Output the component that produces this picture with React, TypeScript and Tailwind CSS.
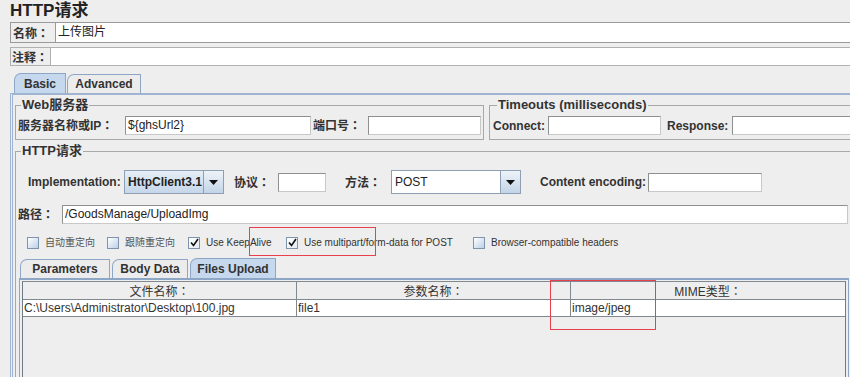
import React from "react";

const font = { fontFamily: '"Liberation Sans", Arial, "Noto Sans CJK SC", sans-serif' };
const jp = { fontFamily: '"Noto Sans CJK JP", sans-serif' };

// full-width colon centred like the Swing font does
const L = ({ text, className = "" }: { text: string; className?: string }) => {
	const hasColon = text.endsWith("：");
	return (
		<span className={`font-bold text-[12px] whitespace-nowrap ${className}`}>
			{hasColon ? text.slice(0, -1) : text}
			{hasColon && <span style={jp}>：</span>}
		</span>
	);
};

const Field = ({ w, value, className = "" }: { w?: string; value?: string; className?: string }) => (
	<div
		className={`h-[19px] bg-white border border-[#8e8f8f] border-r-[#c8c8c8] border-b-[#c8c8c8] pl-[2px] text-[12px] leading-[17px] text-[#222] whitespace-nowrap overflow-hidden ${w ?? "flex-1"} ${className}`}
	>
		{value}
	</div>
);

const Arrow = () => (
	<div className="w-[20px] h-full border-l border-[#8e9fb4] bg-gradient-to-b from-[#eef3f9] to-[#c3d4e8] flex items-center justify-center">
		<svg width="9" height="5" viewBox="0 0 9 5">
			<path d="M0 0 L9 0 L4.5 5 Z" fill="#111" />
		</svg>
	</div>
);

const Check = ({ checked, label, small }: { checked?: boolean; label: string; small?: boolean }) => (
	<div className="flex items-center">
		<div
			className={`w-[12px] h-[12px] border border-[#7f93ab] flex items-center justify-center ${
				checked ? "bg-gradient-to-br from-white to-[#e4ebf3]" : "bg-gradient-to-br from-white to-[#bcd0e8]"
			}`}
		>
			{checked && (
				<svg width="9" height="9" viewBox="0 0 9 9">
					<path d="M1 4.5 L3.5 7.5 L8 1" stroke="#111" strokeWidth="1.6" fill="none" />
				</svg>
			)}
		</div>
		<span className={`ml-[6px] text-[10px] ${small ? "text-[#555]" : "text-[#333]"}`}>{label}</span>
	</div>
);

const Tab = ({ label, w, active }: { label: string; w: string; active?: boolean }) => (
	<div
		className={`${w} ${
			active ? "h-[20px] bg-[#c6d8ee]" : "h-[19px] bg-[#ececec]"
		} border border-b-0 border-[#8ea6c6] rounded-tl-[7px] flex items-center justify-center font-bold text-[12px] text-[#333]`}
	>
		{label}
	</div>
);

export default function App() {
	return (
		<div className="relative w-[850px] h-[377px] overflow-hidden bg-[#eeeeee] text-[#333]" style={font}>
			<div className="h-[22px] pl-[10px] pt-[1px] text-[17px] font-bold leading-[20px] text-[#222]">HTTP请求</div>

			<div className="ml-[10px] h-[21px] flex border border-r-0 border-[#9a9a9a]">
				<L text="名称：" className="w-[44px] pl-[2px] leading-[19px]" />
				<div className="flex-1 bg-white border-l border-[#9a9a9a] pl-[2px] text-[12px] leading-[19px] text-[#222]">上传图片</div>
			</div>

			<div className="ml-[10px] mt-[4px] h-[19px] flex border border-r-0 border-[#b0b0b0]">
				<L text="注释：" className="w-[39px] pl-[1px] leading-[17px]" />
				<div className="flex-1 bg-white border-l border-[#b0b0b0]" />
			</div>

			<div className="mt-[8px] pl-[14px] h-[19px] flex items-end gap-[1px]">
				<Tab label="Basic" w="w-[52px]" active />
				<Tab label="Advanced" w="w-[74px]" />
			</div>

			<div className="ml-[10px] h-[300px] border-t-2 border-l-[3px] border-[#9fb4d0] border-double pt-[3px]">
				<div className="flex">
					<fieldset className="ml-[2px] w-[472px] border border-[#a8a8a8] px-[2px] pb-[4px]">
						<legend className="ml-[3px] px-[1px] font-bold text-[13px] leading-[14px] text-[#333]">Web服务器</legend>
						<div className="mt-[4px] flex items-center h-[19px]">
							<L text="服务器名称或IP：" className="w-[107px]" />
							<Field w="w-[186px]" value="${ghsUrl2}" />
							<L text="端口号：" className="w-[57px] pl-[2px]" />
							<Field w="w-[113px]" />
						</div>
					</fieldset>
					<fieldset className="ml-[5px] w-[380px] border border-[#a8a8a8] px-[3px] pb-[4px]">
						<legend className="ml-[4px] px-[1px] font-bold text-[13px] leading-[14px] text-[#333]">Timeouts (milliseconds)</legend>
						<div className="mt-[4px] flex items-center h-[19px]">
							<L text="Connect:" className="w-[55px]" />
							<Field w="w-[113px]" />
							<L text="Response:" className="w-[71px] pl-[6px]" />
							<Field w="w-[125px]" />
						</div>
					</fieldset>
				</div>

				<fieldset className="mt-[4px] ml-[2px] w-[850px] h-[240px] border border-[#a8a8a8] pl-[2px]">
					<legend className="ml-[3px] px-[1px] font-bold text-[13px] leading-[14px] text-[#333]">HTTP请求</legend>

					<div className="mt-[12px] ml-[10px] flex items-center h-[24px]">
						<L text="Implementation:" className="w-[96px]" />
						<div className="w-[100px] h-[24px] flex border border-[#8e9fb4] bg-gradient-to-b from-[#e6eef7] to-[#c6d7ea]">
							<div className="flex-1 pl-[3px] font-bold text-[12px] leading-[22px] text-[#222]">HttpClient3.1</div>
							<Arrow />
						</div>
						<L text="协议：" className="ml-[10px] w-[44px]" />
						<Field w="w-[48px]" />
						<L text="方法：" className="ml-[19px] w-[46px]" />
						<div className="w-[130px] h-[24px] flex border border-[#8e9fb4] bg-white">
							<div className="flex-1 pl-[3px] text-[12px] leading-[22px] text-[#222]">POST</div>
							<Arrow />
						</div>
						<L text="Content encoding:" className="ml-[19px] w-[108px]" />
						<Field w="w-[114px]" />
					</div>

					<div className="mt-[11px] flex items-center h-[19px]">
						<L text="路径：" className="w-[44px]" />
						<Field w="w-[786px]" value="/GoodsManage/UploadImg" />
					</div>

					<div className="mt-[12px] ml-[9px] flex items-center h-[13px]">
						<div className="w-[80px]"><Check label="自动重定向" small /></div>
						<div className="w-[81px]"><Check label="跟随重定向" small /></div>
						<div className="w-[98px]"><Check label="Use KeepAlive" checked /></div>
						<div className="w-[187px]"><Check label="Use multipart/form-data for POST" checked /></div>
						<Check label="Browser-compatible headers" />
					</div>

					<div className="mt-[9px] ml-[2px] flex items-end h-[20px] gap-[2px]">
						<Tab label="Parameters" w="w-[90px]" />
						<Tab label="Body Data" w="w-[76px]" />
						<Tab label="Files Upload" w="w-[86px]" active />
					</div>
					<div className="ml-[1px] w-[830px] h-[120px] border-t-2 border-x border-[#8ea6c6] pt-[1px] px-[2px]">
						<div className="border-x border-[#6e7c8a] h-[100px]">
							<div className="grid grid-cols-[274px_274px_1fr] h-[19px] border-y border-[#808890] bg-[#eeeeee] text-[12px] leading-[17px] text-[#333]">
								<div className="text-center border-r border-[#808890]">文件名称<span style={jp}>：</span></div>
								<div className="text-center border-r border-[#808890]">参数名称<span style={jp}>：</span></div>
								<div className="text-center">MIME类型<span style={jp}>：</span></div>
							</div>
							<div className="grid grid-cols-[274px_274px_1fr] h-[17px] border-b border-[#808890] bg-white text-[12px] leading-[16px] text-[#333]">
								<div className="pl-[1px] border-r border-[#808890] whitespace-nowrap">C:\Users\Administrator\Desktop\100.jpg</div>
								<div className="pl-[1px] border-r border-[#808890]">file1</div>
								<div className="pl-[1px]">image/jpeg</div>
							</div>
						</div>
					</div>
				</fieldset>
			</div>

			<div className="absolute left-[249px] top-[227px] w-[127px] h-[29px] border border-[#e8404c]" />
			<div className="absolute left-[550px] top-[280px] w-[106px] h-[50px] border border-[#e8404c]" />
		</div>
	);
}
